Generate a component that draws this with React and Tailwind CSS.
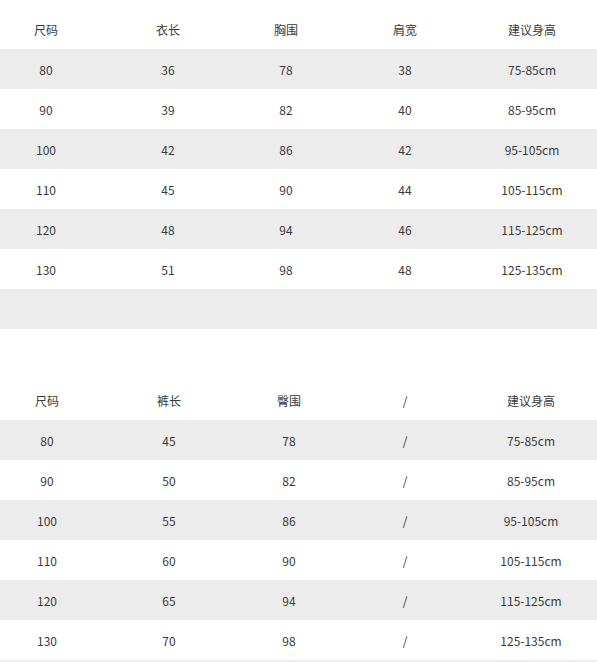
const t1 = {
  head: ["尺码", "衣长", "胸围", "肩宽", "建议身高"],
  rows: [
    ["80", "36", "78", "38", "75-85cm"],
    ["90", "39", "82", "40", "85-95cm"],
    ["100", "42", "86", "42", "95-105cm"],
    ["110", "45", "90", "44", "105-115cm"],
    ["120", "48", "94", "46", "115-125cm"],
    ["130", "51", "98", "48", "125-135cm"],
    ["", "", "", "", ""],
  ],
};
const t2 = {
  head: ["尺码", "裤长", "臀围", "/", "建议身高"],
  rows: [
    ["80", "45", "78", "/", "75-85cm"],
    ["90", "50", "82", "/", "85-95cm"],
    ["100", "55", "86", "/", "95-105cm"],
    ["110", "60", "90", "/", "105-115cm"],
    ["120", "65", "94", "/", "115-125cm"],
    ["130", "70", "98", "/", "125-135cm"],
  ],
};

function Row({ cells, grey, cols }) {
  return (
    <div className={`grid h-[40px] items-center ${cols} ${grey ? "bg-[#ececec]" : "bg-white"}`}>
      {cells.map((c, i) => (
        <div key={i} className="text-center pt-[2px]">{c}</div>
      ))}
    </div>
  );
}

export default function App() {
  const cols1 = "grid-cols-[92px_152px_84px_154px_100px_15px]";
  const cols2 = "grid-cols-[94px_150px_90px_142px_110px_11px]";
  return (
    <div
      className="w-[597px] h-[662px] overflow-hidden bg-white text-[12px] text-[#3a3a3a] leading-none"
      style={{ fontFamily: '"Noto Sans CJK SC", "Liberation Sans", sans-serif' }}
    >
      <div className="pt-[9px]">
        <Row cells={[...t1.head, ""]} cols={cols1} />
        {t1.rows.map((r, i) => (
          <Row key={i} cells={[...r, ""]} grey={i % 2 === 0} cols={cols1} />
        ))}
      </div>
      <div className="pt-[51px]">
        <Row cells={[...t2.head, ""]} cols={cols2} />
        {t2.rows.map((r, i) => (
          <Row key={i} cells={[...r, ""]} grey={i % 2 === 0} cols={cols2} />
        ))}
        <div className="h-[2px] bg-[#ececec]" />
      </div>
    </div>
  );
}
